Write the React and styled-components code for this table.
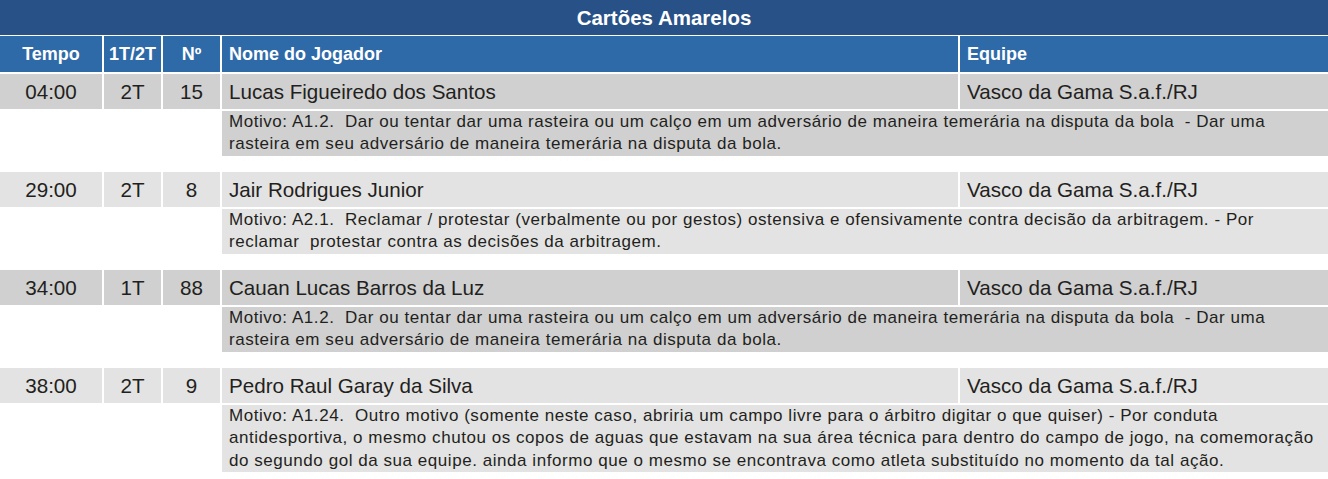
import React from 'react';
import styled, { createGlobalStyle } from 'styled-components';

const Global = createGlobalStyle`
    body {
        margin: 0;
        background: #ffffff;
        font-family: "Liberation Sans", Arial, sans-serif;
        color: #231f20;
    }
`;

const Wrap = styled.div`
    width: 1328px;
`;

const Title = styled.div`
    height: 35px;
    background: #275187;
    color: #ffffff;
    font-weight: bold;
    font-size: 20.5px;
    display: flex;
    align-items: center;
    justify-content: center;
    margin-bottom: 1px;
`;

const Grid = styled.div`
    display: grid;
    grid-template-columns: 102px 57px 57px 736px 1fr;
    column-gap: 2px;
    row-gap: 2px;
`;

const Th = styled.div`
    height: 36px;
    background: #2f6aa8;
    color: #ffffff;
    font-weight: bold;
    font-size: 18px;
    display: flex;
    align-items: center;
    justify-content: ${props => props.left ? 'flex-start' : 'center'};
    padding: ${props => props.left ? '0 7px' : '0'};
`;

const Td = styled.div`
    height: 35px;
    background: ${props => props.dark ? '#d0d0d0' : '#e3e3e3'};
    font-size: 20.6px;
    display: flex;
    align-items: center;
    justify-content: ${props => props.left ? 'flex-start' : 'center'};
    padding: ${props => props.left ? '0 7px' : '0'};
`;

const Motivo = styled.div`
    grid-column: 4 / 6;
    background: ${props => props.dark ? '#d0d0d0' : '#e3e3e3'};
    font-size: 17px;
    letter-spacing: 0.55px;
    line-height: 22.4px;
    padding: 0 3px 0 7px;
    min-height: 45px;
    box-sizing: border-box;
    margin-bottom: 14px;
`;

const cards = [
    {
        tempo: '04:00', tt: '2T', num: '15', nome: 'Lucas Figueiredo dos Santos', equipe: 'Vasco da Gama S.a.f./RJ',
        motivo: 'Motivo: A1.2.\u00a0 Dar ou tentar dar uma rasteira ou um calço em um adversário de maneira temerária na disputa da bola\u00a0 - Dar uma rasteira em seu adversário de maneira temerária na disputa da bola.',
    },
    {
        tempo: '29:00', tt: '2T', num: '8', nome: 'Jair Rodrigues Junior', equipe: 'Vasco da Gama S.a.f./RJ',
        motivo: 'Motivo: A2.1.\u00a0 Reclamar / protestar (verbalmente ou por gestos) ostensiva e ofensivamente contra decisão da arbitragem. - Por reclamar\u00a0 protestar contra as decisões da arbitragem.',
    },
    {
        tempo: '34:00', tt: '1T', num: '88', nome: 'Cauan Lucas Barros da Luz', equipe: 'Vasco da Gama S.a.f./RJ',
        motivo: 'Motivo: A1.2.\u00a0 Dar ou tentar dar uma rasteira ou um calço em um adversário de maneira temerária na disputa da bola\u00a0 - Dar uma rasteira em seu adversário de maneira temerária na disputa da bola.',
    },
    {
        tempo: '38:00', tt: '2T', num: '9', nome: 'Pedro Raul Garay da Silva', equipe: 'Vasco da Gama S.a.f./RJ',
        motivo: 'Motivo: A1.24.\u00a0 Outro motivo (somente neste caso, abriria um campo livre para o árbitro digitar o que quiser) - Por conduta antidesportiva, o mesmo chutou os copos de aguas que estavam na sua área técnica para dentro do campo de jogo, na comemoração do segundo gol da sua equipe. ainda informo que o mesmo se encontrava como atleta substituído no momento da tal ação.',
    },
];

export default function App() {
    return (
        <Wrap>
            <Global />
            <Title>Cartões Amarelos</Title>
            <Grid>
                <Th>Tempo</Th>
                <Th>1T/2T</Th>
                <Th>Nº</Th>
                <Th left>Nome do Jogador</Th>
                <Th left>Equipe</Th>
                {cards.map((c, i) => {
                    const dark = i % 2 === 0;
                    return (
                        <React.Fragment key={i}>
                            <Td dark={dark}>{c.tempo}</Td>
                            <Td dark={dark}>{c.tt}</Td>
                            <Td dark={dark}>{c.num}</Td>
                            <Td dark={dark} left>{c.nome}</Td>
                            <Td dark={dark} left>{c.equipe}</Td>
                            <Motivo dark={dark}>{c.motivo}</Motivo>
                        </React.Fragment>
                    );
                })}
            </Grid>
        </Wrap>
    );
}
